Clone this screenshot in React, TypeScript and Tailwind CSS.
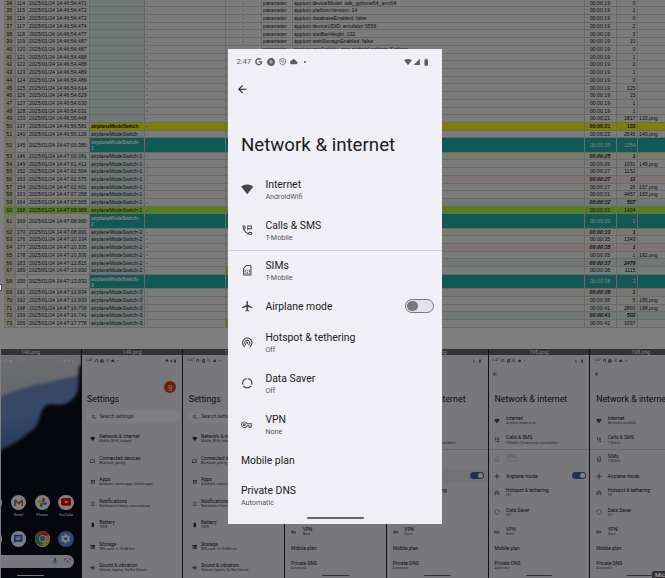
import type { ReactNode } from "react";
import {
  MdAirplanemodeActive, MdApps, MdArrowBack, MdBatteryFull, MdCloud, MdDevices, MdMic,
  MdNotificationsNone, MdOutlinePermPhoneMsg, MdOutlineSimCard, MdOutlineVpnKey, MdSearch, MdSignalCellular4Bar,
  MdSignalWifi4Bar, MdStorage, MdVolumeUp, MdWifiTethering, MdSettings, MdMessage,
} from "react-icons/md";
import { FaGoogle } from "react-icons/fa";

type Log = [line: number, seq: number, time: string, name: string, elapsed: string, ms: string, file?: string, tone?: string];

const S = "airplaneModeSwitch";
const LOGS: Log[] = [
  [34, 114, "14:46:54.471", "", "19", "0"],
  [35, 115, "14:46:54.472", "", "19", "1"],
  [36, 116, "14:46:54.472", "", "19", "0"],
  [37, 117, "14:46:54.474", "", "19", "2"],
  [38, 118, "14:46:54.477", "", "19", "3"],
  [39, 119, "14:46:54.487", "", "19", "10"],
  [40, 120, "14:46:54.487", "", "19", "0"],
  [41, 121, "14:46:54.488", "", "19", "1"],
  [42, 122, "14:46:54.488", "", "19", "0"],
  [43, 123, "14:46:54.489", "", "19", "1"],
  [44, 124, "14:46:54.489", "", "19", "0"],
  [45, 125, "14:46:54.614", "", "19", "125"],
  [46, 126, "14:46:54.629", "", "19", "15"],
  [47, 127, "14:46:54.630", "", "19", "1"],
  [48, 128, "14:46:54.631", "", "19", "1"],
  [49, 133, "14:46:56.448", "", "21", "1817", "133.png"],
  [50, 137, "14:46:56.581", S, "21", "133", "", "yellow"],
  [51, 140, "14:46:59.126", S, "23", "2545", "140.png"],
  [52, 145, "14:47:00.380", S + "-1", "25", "1254", "", "teal"],
  [53, 146, "14:47:00.381", S + "-1", "25", "1", "", "beige"],
  [54, 149, "14:47:01.412", S + "-1", "26", "1031", "149.png"],
  [55, 152, "14:47:02.564", S + "-1", "27", "1152"],
  [56, 153, "14:47:02.575", S + "-1", "27", "11", "", "pink"],
  [57, 154, "14:47:02.601", S + "-1", "27", "26", "157.png"],
  [58, 163, "14:47:07.058", S + "-1", "31", "4457", "163.png"],
  [59, 164, "14:47:07.565", S + "-1", "32", "507", "", "mint"],
  [60, 168, "14:47:08.989", S + "-1", "33", "1424", "", "lime"],
  [61, 169, "14:47:08.990", S + "-2", "33", "1", "", "teal"],
  [62, 170, "14:47:08.991", S + "-2", "33", "1", "", "beige"],
  [63, 176, "14:47:10.334", S + "-2", "35", "1343"],
  [64, 177, "14:47:10.335", S + "-2", "35", "1", "", "pink"],
  [65, 178, "14:47:10.336", S + "-2", "35", "1", "182.png"],
  [66, 183, "14:47:12.815", S + "-2", "37", "2479", "", "mint"],
  [67, 189, "14:47:13.930", S + "-2", "38", "1115", "", "ok"],
  [68, 190, "14:47:13.933", S + "-3", "38", "3", "", "teal"],
  [69, 191, "14:47:13.934", S + "-3", "38", "1", "", "pink"],
  [70, 192, "14:47:13.939", S + "-3", "38", "5", "195.png"],
  [71, 198, "14:47:16.739", S + "-3", "41", "2800", "198.png"],
  [72, 199, "14:47:16.741", S + "-3", "41", "502", "", "mint"],
  [73, 205, "14:47:17.778", S + "-3", "42", "1037", "", "ok"],
];

const PARAMS: Record<number, string> = {
  34: "appium:deviceModel: sdk_gphone64_arm64",
  35: "appium:platformVersion: 14",
  36: "appium:databaseEnabled: false",
  37: "appium:deviceUDID: emulator-5556",
  38: "appium:statBarHeight: 132",
  39: "appium:webStorageEnabled: false",
  40: "appium:appActivity: com.android.settings.Settings",
};

const WIDE: Record<string, string> = { yellow: "bg-[#ffff00]", teal: "bg-[#20b2aa]", lime: "bg-[#adff2f]" };
const DETAIL: Record<string, string> = { beige: "bg-[#f5f5dc]", pink: "bg-[#fbece8]", mint: "bg-[#e4f3e8]" };

function LogRow({ log }: { log: Log }) {
  const [line, seq, time, name, elapsed, ms, file, tone = ""] = log;
  const wide = WIDE[tone];
  const teal = tone === "teal";
  const detail = wide ?? DETAIL[tone] ?? "bg-[#f8f8f8]";
  const strong = DETAIL[tone] ? "font-bold italic" : tone === "yellow" ? "font-bold" : "";
  const ink = teal ? "text-white" : "";
  const side = tone === "lime" ? "bg-[#adff2f]" : "";
  const cell = "flex shrink-0 items-center border-r border-b border-[#d2d2d2] pt-[0.8px] whitespace-nowrap";
  return (
    <div className={`flex ${teal ? "h-[14.2px]" : "h-[7.73px]"}`}>
      <div className={`${cell} w-[11.5px] justify-center ${side || "bg-[#ece8cc]"}`}>{line}</div>
      <div className={`${cell} w-3 justify-center ${side || "bg-[#f8f8f8]"}`}>{seq}</div>
      <div className={`${cell} w-[62px] pl-[1.5px] ${side || "bg-[#f8f8f8]"}`}>2025/01/24 {time}</div>
      <div className={`${cell} w-[55px] pl-[1.5px] ${wide ?? "bg-[#dfeeee]"} ${tone === "yellow" ? "font-bold tracking-[-0.15px]" : ""}`}>
        {teal ? (
          <span className="text-[5px] leading-[6px] font-bold tracking-[-0.1px] text-white">
            {name.slice(0, -1)}
            <br />
            {name.slice(-1)}
          </span>
        ) : (
          name
        )}
      </div>
      <div className={`${cell} w-[81px] pl-[1.5px] ${wide ?? "bg-[#f8f8f8]"} ${ink}`}>-</div>
      <div className={`${cell} w-9 justify-center ${tone === "ok" ? "bg-[#adff2f]" : detail}`}>{PARAMS[line] && "-"}</div>
      <div className={`${cell} w-[31px] pl-[1.5px] ${detail}`}>{PARAMS[line] && "parameter"}</div>
      <div className={`${cell} w-[292px] pl-[1.5px] ${detail}`}>{PARAMS[line]}</div>
      <div className={`${cell} w-8 justify-center ${detail} ${strong} ${ink}`}>00:00:{elapsed}</div>
      <div className={`${cell} w-[21px] justify-end pr-[1px] ${detail} ${strong} ${ink}`}>{ms}</div>
      <div className={`${cell} w-8 pl-[1.5px] ${detail}`}>{file}</div>
    </div>
  );
}

function StatusBar({ airplane = false, light = false }: { airplane?: boolean; light?: boolean }) {
  return (
    <div className={`flex h-[26px] shrink-0 items-center pr-[12px] pl-[8px] ${light ? "text-white" : "text-[#5d5d64]"}`}>
      <span className="w-[19px] text-[7.800px] tracking-[-0.1px]">2:47</span>
      <FaGoogle className="mr-[4px] size-[7.5px]" />
      <svg viewBox="0 0 16 16" className="mr-[4px] size-[8px]">
        <circle cx="8" cy="8" r="5.4" fill="none" stroke="currentColor" strokeWidth="5" />
        <circle cx="8" cy="8" r="1.7" fill="currentColor" />
      </svg>
      <svg viewBox="0 0 16 16" className="mr-[4px] size-[7.5px]" fill="none" stroke="currentColor" strokeWidth="1.7">
        <path d="M8 1 2 3v5c0 3.500 3 6 6 7 3-1 6-3.500 6-7V3ZM5 5l4 6M8 4l3 4" />
      </svg>
      <MdCloud className="mr-[6px] size-[7.500px]" />
      <span className="size-[2px] rounded-full bg-current" />
      <div className="ml-auto flex items-center">
        {airplane ? (
          <MdAirplanemodeActive className="mr-[5px] size-[8px]" />
        ) : (
          <>
            <MdSignalWifi4Bar className="mr-[1px] size-[8px]" />
            <MdSignalCellular4Bar className="mr-[1px] size-[7.500px]" />
          </>
        )}
        <MdBatteryFull className="size-[8.500px]" />
      </div>
    </div>
  );
}

function DataSaverIcon() {
  return (
    <svg viewBox="0 0 24 24" className="size-[12.500px]" fill="none" stroke="currentColor" strokeWidth="2.400">
      <path d="M13 3.050A9 9 0 0 1 20.600 14.600" />
      <path d="M19.300 17.200A9 9 0 0 1 4.700 17.200" />
      <path d="M3.400 14.600A9 9 0 0 1 11 3.050" />
    </svg>
  );
}

function Toggle({ on }: { on: boolean }) {
  return on ? (
    <div className="flex h-[14.500px] w-[29.500px] items-center justify-end rounded-full bg-[#4a62ac] pr-[2px]">
      <div className="size-[10.500px] rounded-full bg-white" />
    </div>
  ) : (
    <div className="flex h-[14.500px] w-[29.500px] items-center rounded-full border border-[#77767f] bg-[#e3e1e9] pl-[1.500px]">
      <div className="size-[10.500px] rounded-full bg-[#77767f]" />
    </div>
  );
}

type RowProps = { icon?: ReactNode; title: string; sub?: string; faded?: boolean; pressed?: boolean; end?: ReactNode };

function NetRow({ icon, title, sub, faded, pressed, end }: RowProps) {
  return (
    <div className={`flex shrink-0 items-center pr-[8px] pl-[12.500px] ${sub ? "h-[41px]" : "h-[30px]"} ${pressed ? "bg-[#e6e5ec]" : ""}`}>
      {icon && <div className={`w-[24.500px] shrink-0 text-[12.500px] text-[#45464f] ${faded ? "opacity-30" : ""}`}>{icon}</div>}
      <div className={`flex-1 whitespace-nowrap ${faded ? "opacity-30" : ""}`}>
        <div className="text-[10.400px] leading-[13px] text-[#1b1b21]">{title}</div>
        {sub && <div className="text-[7.200px] leading-[11px] text-[#55565f]">{sub}</div>}
      </div>
      {end}
    </div>
  );
}

type NetProps = { internet?: string; calls?: string; airplane?: boolean; noSim?: boolean; pressed?: boolean };

function NetworkScreen({ internet = "AndroidWifi", calls = "T-Mobile", airplane = false, noSim = false, pressed = false }: NetProps) {
  return (
    <div className="flex h-[475px] w-[214px] flex-col overflow-hidden bg-[#f0eff6]">
      <StatusBar airplane={airplane} />
      <div className="flex h-[29px] shrink-0 items-center pl-[8px] text-[#1b1b21]">
        <MdArrowBack className="size-[12.500px]" />
      </div>
      <h1 className="flex h-[65px] shrink-0 items-end pb-[12px] pl-[12.500px] text-[18.700px] leading-[24px] whitespace-nowrap text-[#1b1b21]">
        Network &amp; internet
      </h1>
      <NetRow icon={<MdSignalWifi4Bar />} title="Internet" sub={internet} />
      <NetRow icon={<MdOutlinePermPhoneMsg />} title="Calls & SMS" sub={calls} />
      <div className="-mt-px h-px shrink-0 bg-[#d0cfd6]" />
      <div className="-mt-px flex shrink-0 flex-col pb-px">
        <NetRow icon={<MdOutlineSimCard />} title="SIMs" sub="T-Mobile" faded={noSim} />
        <NetRow icon={<MdAirplanemodeActive />} title="Airplane mode" end={<Toggle on={airplane} />} pressed={pressed} />
      </div>
      <NetRow icon={<MdWifiTethering />} title="Hotspot & tethering" sub="Off" />
      <NetRow icon={<DataSaverIcon />} title="Data Saver" sub="Off" />
      <NetRow icon={<MdOutlineVpnKey className="size-[11.500px]" />} title="VPN" sub="None" />
      <NetRow title="Mobile plan" />
      <NetRow title="Private DNS" sub="Automatic" />
      <div className="mx-auto mt-[1px] h-[2px] w-[57px] shrink-0 rounded-full bg-[#66656b]" />
    </div>
  );
}

const SETTINGS: [ReactNode, string, string][] = [
  [<MdSignalWifi4Bar key="i" />, "Network & internet", "Mobile, Wi-Fi, hotspot"],
  [<MdDevices key="i" />, "Connected devices", "Bluetooth, pairing"],
  [<MdApps key="i" />, "Apps", "Assistant, recent apps, default apps"],
  [<MdNotificationsNone key="i" />, "Notifications", "Notification history, conversations"],
  [<MdBatteryFull key="i" />, "Battery", "100%"],
  [<MdStorage key="i" />, "Storage", "58% used - 6.78 GB free"],
  [<MdVolumeUp key="i" />, "Sound & vibration", "Volume, haptics, Do Not Disturb"],
];

function SettingsScreen() {
  return (
    <div className="flex h-[475px] w-[214px] flex-col overflow-hidden bg-[#f0eff6]">
      <StatusBar />
      <div className="flex h-[56px] shrink-0 items-end justify-end pr-[14px]">
        <div className="flex size-[25px] items-center justify-center rounded-full bg-[#dd420e] text-[15px] text-white">g</div>
      </div>
      <h1 className="h-[35px] shrink-0 pl-[11px] text-[18.700px] leading-[26px] text-[#1b1b21]">Settings</h1>
      <div className="mx-[9px] mt-[1px] flex h-[28px] shrink-0 items-center rounded-full bg-[#fbfaff] pl-[10px] text-[#45464f]">
        <MdSearch className="mr-[6px] size-[12.500px]" />
        <span className="text-[10.400px]">Search settings</span>
      </div>
      <div className="mt-[10px] flex flex-col">
        {SETTINGS.map(([icon, title, sub]) => (
          <div key={title} className="flex h-[45.600px] shrink-0 items-center pl-[17px]">
            <div className="w-[20px] shrink-0 text-[12px] text-[#33343b]">{icon}</div>
            <div className="whitespace-nowrap">
              <div className="text-[10.400px] leading-[13px] text-[#1b1b21]">{title}</div>
              <div className="text-[7.200px] leading-[11px] text-[#45464f]">{sub}</div>
            </div>
          </div>
        ))}
      </div>
    </div>
  );
}

function AppIcon({ label, children }: { label?: string; children: ReactNode }) {
  return (
    <div className="flex w-[50.300px] shrink-0 flex-col items-center">
      <div className="flex size-[32px] items-center justify-center overflow-hidden rounded-full bg-white">{children}</div>
      {label && <div className="mt-[6px] text-[8px] leading-[10px] text-white">{label}</div>}
    </div>
  );
}

function HomeScreen() {
  return (
    <div className="relative h-[475px] w-[214px] overflow-hidden bg-[#10101c]">
      <svg viewBox="0 0 213 475" className="absolute inset-0 h-[475px] w-[214px]">
        <defs>
          <linearGradient id="sky" x1="0" y1="0" x2="0" y2="1">
            <stop offset="0" stopColor="#dedfe6" />
            <stop offset="1" stopColor="#b4b9c8" />
          </linearGradient>
          <linearGradient id="hill" x1="0" y1="0" x2="0.300" y2="1">
            <stop offset="0" stopColor="#7486ae" />
            <stop offset="0.500" stopColor="#6d92d6" />
            <stop offset="1" stopColor="#41649f" />
          </linearGradient>
          <filter id="soft"><feGaussianBlur stdDeviation="3" /></filter>
        </defs>
        <rect width="213" height="180" fill="url(#sky)" />
        <path d="M0 105C60 82 100 65 145 58L220 40V240H0Z" fill="url(#hill)" filter="url(#soft)" />
        <path d="M0 220C60 196 88 180 118 152C128 138 124 124 139 106C160 100 172 113 192 96C207 86 209 76 209 24L225 20V490H0Z" fill="#10101c" filter="url(#soft)" />
        <path d="M90 475C130 430 170 410 213 405M60 475C120 440 150 400 213 360" fill="none" stroke="#20203a" />
      </svg>
      <div className="relative flex flex-col">
        <StatusBar light />
        <div className="mt-[271px] flex h-[76px] pl-[6px]">
          <AppIcon label="Phone"><span /></AppIcon>
          <AppIcon label="Gmail">
            <svg viewBox="0 0 24 18" className="w-[20px]" fill="none" strokeWidth="4.500">
              <path d="M2.500 18V3" stroke="#4285f4" /><path d="M21.500 18V3" stroke="#34a853" />
              <path d="m2 3 10 8 10-8" stroke="#ea4335" />
            </svg>
          </AppIcon>
          <AppIcon label="Photos">
            <svg viewBox="0 0 24 24" className="w-[23px]">
              <path d="M12 12V1a5.500 5.500 0 0 1 0 11Z" fill="#ea4335" />
              <path d="M12 12h11a5.500 5.500 0 0 1-11 0Z" fill="#4285f4" />
              <path d="M12 12v11a5.500 5.500 0 0 1 0-11Z" fill="#34a853" />
              <path d="M12 12H1a5.500 5.500 0 0 1 11 0Z" fill="#fbbc04" />
            </svg>
          </AppIcon>
          <AppIcon label="YouTube">
            <svg viewBox="0 0 24 18" className="w-[22px]"><rect width="24" height="18" rx="5" fill="#f00" /><path d="m9.500 5 7 4-7 4Z" fill="#fff" /></svg>
          </AppIcon>
        </div>
        <div className="mt-[2px] flex h-[50px] pl-[6px]">
          <AppIcon><span /></AppIcon>
          <AppIcon><MdMessage className="size-[22px] text-[#2b62d9]" /></AppIcon>
          <AppIcon>
            <svg viewBox="0 0 24 24" className="w-[32px]">
              <path d="M12 12 1.600 6A12 12 0 0 1 22.400 6Z" fill="#ea4335" />
              <path d="M12 12 22.400 6A12 12 0 0 1 12 24Z" fill="#fbbc04" />
              <path d="M12 12V24A12 12 0 0 1 1.600 6Z" fill="#34a853" />
              <circle cx="12" cy="12" r="5.600" fill="#fff" /><circle cx="12" cy="12" r="4.400" fill="#4285f4" />
            </svg>
          </AppIcon>
          <AppIcon><div className="flex size-[32px] items-center justify-center bg-[#5b8ee8]"><MdSettings className="size-[24px] text-white" /></div></AppIcon>
        </div>
        <div className="mr-[15px] ml-[15px] flex h-[27px] items-center justify-end gap-[9px] rounded-full bg-[#f0eff6] pr-[7px]">
          <MdMic className="size-[17px] text-[#4285f4]" />
          <svg viewBox="0 0 24 24" className="size-[15px]" fill="none" strokeWidth="3">
            <path d="M2 9V6a4 4 0 0 1 4-4h3" stroke="#ea4335" /><path d="M15 2h3a4 4 0 0 1 4 4v3" stroke="#4285f4" />
            <path d="M2 15v3a4 4 0 0 0 4 4h3" stroke="#fbbc04" /><circle cx="12" cy="12" r="3" stroke="#4285f4" /><path d="M19 19h3" stroke="#34a853" />
          </svg>
        </div>
        <div className="mx-auto mt-[16px] h-[2px] w-[57px] rounded-full bg-white" />
      </div>
    </div>
  );
}

function Thumb({ name, children }: { name: string; children: ReactNode }) {
  return (
    <div className="flex w-[101.700px] shrink-0 flex-col border-r border-[#1c1c1c] bg-[#1c1c1c]">
      <div className="flex h-[5.500px] items-center justify-center bg-[#666] pt-[1px] text-[5.200px] leading-none text-white">{name}</div>
      <div className="h-[223px] overflow-hidden">
        <div className="[zoom:0.472]">{children}</div>
      </div>
    </div>
  );
}

export default function App() {
  return (
    <div className="relative h-[578px] w-[665px] overflow-hidden bg-[#7f7f7f] font-[Roboto,sans-serif]">
      <div className="flex h-[578px] w-[665px] flex-col overflow-hidden bg-white">
        <div className="h-[349px] shrink-0 overflow-hidden bg-[#fdfdfd] pl-[4px] font-['Liberation_Sans',Arial,sans-serif] text-[5.200px] leading-none text-[#222]">
          <div className="-mt-[0.500px]">
            {LOGS.map((log) => <LogRow key={log[0]} log={log} />)}
          </div>
        </div>
        <div className="ml-px flex-1 overflow-hidden bg-[#1c1c1c]">
          <div className="-ml-[20.900px] flex">
            <Thumb name="140.png"><HomeScreen /></Thumb>
            <Thumb name="149.png"><SettingsScreen /></Thumb>
            <Thumb name="157.png"><SettingsScreen /></Thumb>
            <Thumb name="163.png"><NetworkScreen /></Thumb>
            <Thumb name="182.png"><NetworkScreen airplane pressed noSim internet="Airplane mode is on" calls="T-Mobile (Temporarily unavailable)" /></Thumb>
            <Thumb name="195.png"><NetworkScreen airplane noSim internet="Airplane mode is on" calls="T-Mobile (Temporarily unavailable)" /></Thumb>
            <Thumb name="198.png"><NetworkScreen airplane internet="Networks available" /></Thumb>
          </div>
        </div>
      </div>
      <div className="absolute inset-0 bg-black/50" />
      <div className="absolute top-[284px] left-0 h-[7px] w-[2px] border-y border-r border-[#444] bg-white" />
      <div className="absolute top-[571px] left-[652px] h-[8px] w-[30px] rounded-tl-[2px] bg-[#333] pl-[3px] text-[6px] leading-[8px] text-[#bbb]">Micr</div>
      <div className="absolute top-[49px] left-[228.400px]">
        <NetworkScreen />
      </div>
    </div>
  );
}
